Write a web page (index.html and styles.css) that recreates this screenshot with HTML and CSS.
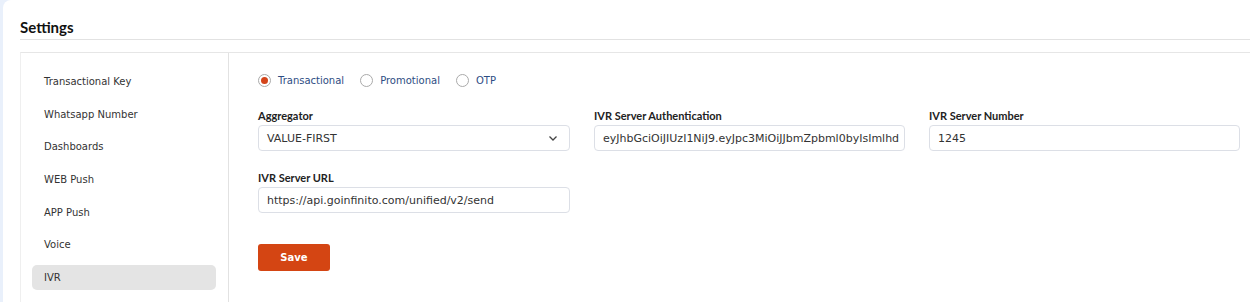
FILE: index.html
```html
<!DOCTYPE html>
<html lang="en">
<head>
  <meta charset="UTF-8"/>
  <title>Settings</title>
  <link rel="stylesheet" href="styles.css">
</head>
<body>
  <div class="page">
    <h2 class="page-title">Settings</h2>

    <div class="panel">
      <!-- ========== SIDEBAR ========== -->
      <ul class="side-nav">
        <li>Transactional Key</li>
        <li>Whatsapp Number</li>
        <li>Dashboards</li>
        <li>WEB Push</li>
        <li>APP Push</li>
        <li>Voice</li>
        <li class="active">IVR</li>
      </ul>

      <!-- ========== FORM ========== -->
      <div class="content">
        <div class="radio-row">
          <label class="radio checked"><span class="dot"></span>Transactional</label>
          <label class="radio"><span class="dot"></span>Promotional</label>
          <label class="radio"><span class="dot"></span>OTP</label>
        </div>

        <div class="form-grid">
          <div class="field">
            <label>Aggregator</label>
            <div class="select">
              <span>VALUE-FIRST</span>
              <svg viewBox="0 0 12 12" class="chev"><path d="M2.5 4.5 6 8l3.5-3.5" fill="none" stroke="#444" stroke-width="1.3"/></svg>
            </div>
          </div>
          <div class="field">
            <label>IVR Server Authentication</label>
            <div class="input">eyJhbGciOiJIUzI1NiJ9.eyJpc3MiOiJJbmZpbml0byIsImlhd</div>
          </div>
          <div class="field">
            <label>IVR Server Number</label>
            <div class="input">1245</div>
          </div>
          <div class="field">
            <label>IVR Server URL</label>
            <div class="input">https://api.goinfinito.com/unified/v2/send</div>
          </div>
        </div>

        <button class="btn-save">Save</button>
      </div>
    </div>
  </div>
</body>
</html>
```

FILE: styles.css
```css
*{margin:0;padding:0;box-sizing:border-box}
body{font-family:'DejaVu Sans',sans-serif;background:#e9f0fb;color:#222;overflow:hidden}
.page{margin-left:3px;background:#fff;border-radius:8px 0 0 0;height:302px;padding:17px 0 0 17px}
.page-title{font:700 15px/20px Lato,sans-serif;color:#111;padding-bottom:2px;border-bottom:1px solid #e2e2e2}
.panel{display:flex;margin-top:12px;border-top:1px solid #e6e6e6;border-left:1px solid #efefef;height:260px}
.side-nav{list-style:none;width:208px;border-right:1px solid #e2e2e2;padding:16px 12px 0 11px;display:flex;flex-direction:column;gap:7.7px}
.side-nav li{height:25px;line-height:25px;padding-left:12px;font-size:10px;color:#333;border-radius:5px}
.side-nav li.active{background:#e4e4e4}
.content{flex:1;padding:18px 0 0 29px}
.radio-row{display:flex;gap:16px;height:18px;align-items:center}
.radio{display:flex;align-items:center;gap:7px;font-size:10px;color:#2d4d83}
.dot{width:13px;height:13px;border:1px solid #aaa;border-radius:50%;display:flex;align-items:center;justify-content:center}
.radio.checked .dot::after{content:'';width:7px;height:7px;border-radius:50%;background:#d4441a}
.form-grid{display:grid;grid-template-columns:312px 311px 311px;column-gap:24px;row-gap:20px;margin-top:20px}
.field label{display:block;font:700 11px/14px Lato,sans-serif;color:#222;margin-bottom:2px}
.select,.input{height:26px;border:1px solid #dcdfe6;border-radius:4px;padding:0 8px;font-size:11px;color:#333;display:flex;align-items:center;white-space:nowrap;overflow:hidden}
.select{justify-content:space-between;padding-right:10px}
.chev{width:12px;height:12px}
.btn-save{margin-top:31px;width:72px;height:27px;border:none;border-radius:3px;background:#d44513;color:#fff;font:700 10px 'DejaVu Sans',sans-serif}
```
